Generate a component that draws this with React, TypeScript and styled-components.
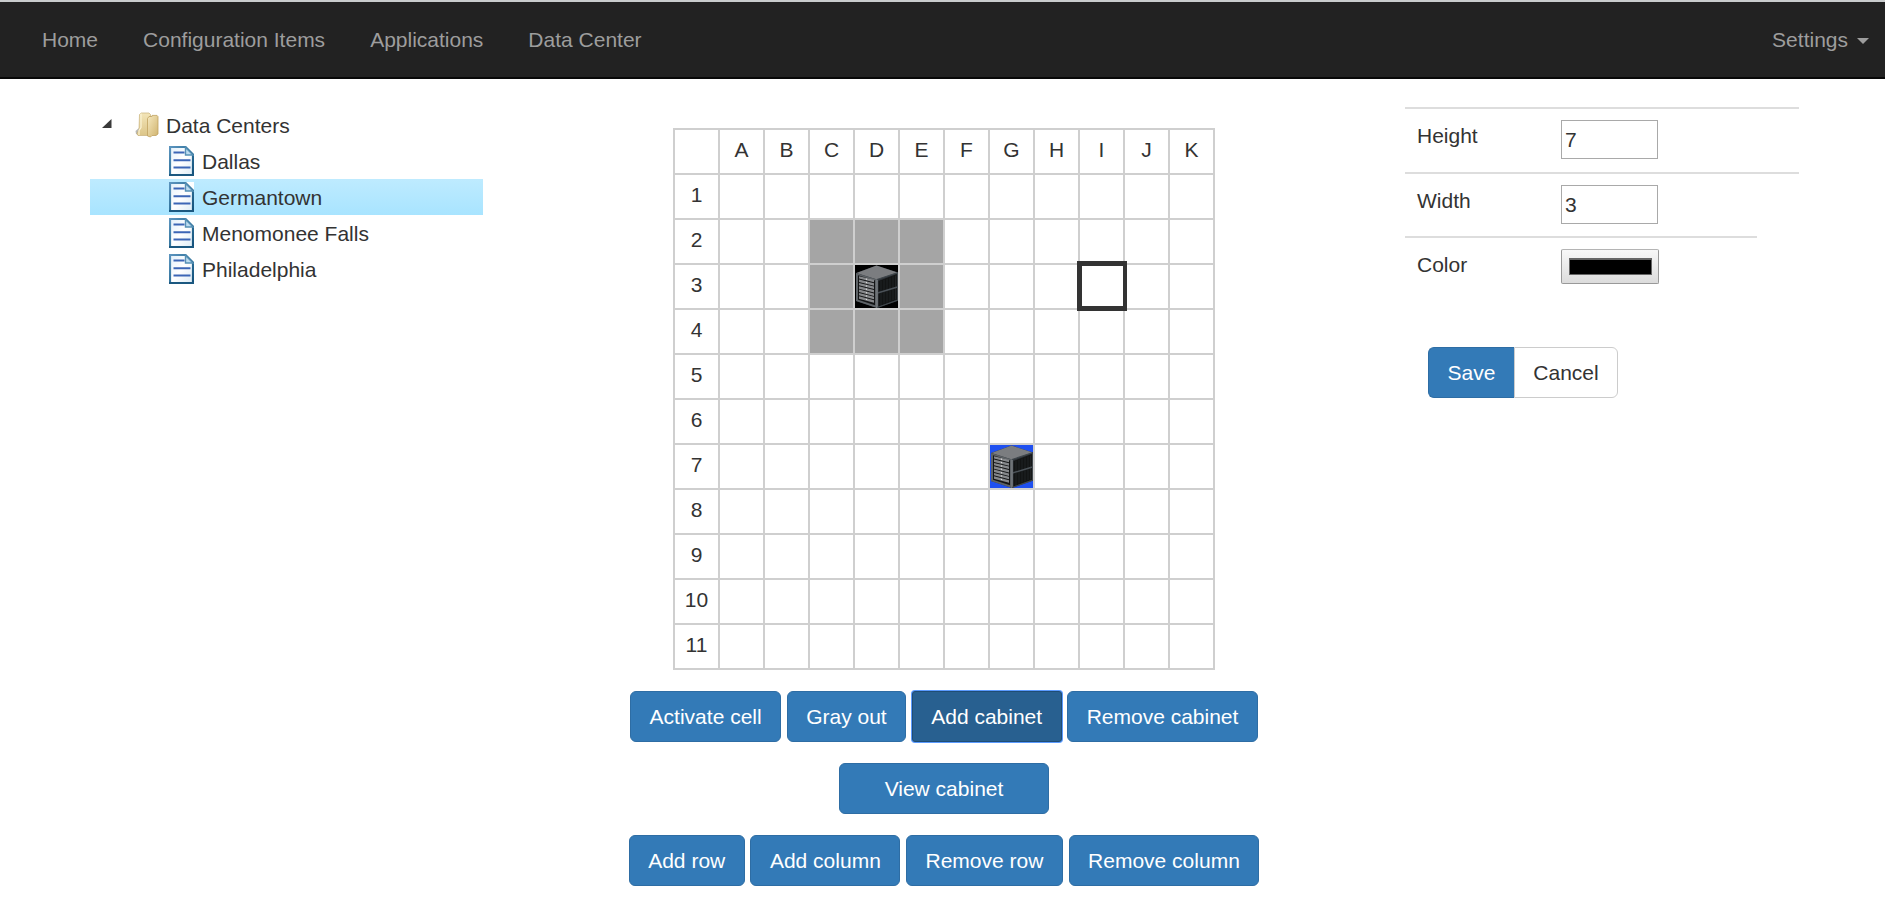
import React from "react";
import styled, { createGlobalStyle, css } from "styled-components";

const GlobalStyle = createGlobalStyle`
  *, *::before, *::after { box-sizing: border-box; }
  body {
    margin: 0;
    background: #fff;
    color: #333;
    font-family: "Liberation Sans", Arial, sans-serif;
    font-size: 21px;
    line-height: 30px;
  }
  button, input { font: inherit; color: inherit; }
`;

const Page = styled.div`
  height: 923px;
  overflow: hidden;
`;

const Navbar = styled.nav`
  display: flex;
  justify-content: space-between;
  align-items: center;
  height: 79px;
  padding: 0 16px 0 42px;
  border-top: 2px solid #c9cccd;
  border-bottom: 2px solid #080808;
  background: #222;
  color: #9d9d9d;
`;

const NavLinks = styled.div`
  display: flex;
  gap: 45px;
`;

const NavLink = styled.a`
  display: flex;
  align-items: center;
`;

const Caret = styled.span`
  margin: 3px 0 0 9px;
  border-top: 6px solid;
  border-left: 6px solid transparent;
  border-right: 6px solid transparent;
`;

const Content = styled.main`
  display: grid;
  grid-template-columns: 393px 640px 394px;
  justify-content: start;
  column-gap: 141px;
  padding: 28px 0 0 90px;
`;

const Tree = styled.ul`
  margin: 0;
  padding: 0;
  list-style: none;
`;

const TreeRow = styled.li<{ $selected?: boolean; $depth: number }>`
  display: flex;
  align-items: center;
  height: 36px;
  padding-left: ${(p) => (p.$depth ? 79 : 12)}px;
  line-height: 36px;
  ${(p) => p.$selected && css`background: linear-gradient(#beebff, #a8e4ff);`}
  svg { flex: none; }
`;

const RootLabel = styled.span`
  margin-left: 7px;
  padding-top: 2px;
`;

const LeafLabel = styled.span`
  margin-left: 8px;
  padding-top: 2px;
`;

const ExpandArrow = styled.svg`
  margin: -3px 23px 0 0;
`;

const Center = styled.section`
  display: flex;
  flex-direction: column;
  align-items: center;
  padding-top: 21px;
`;

const FloorGrid = styled.div`
  display: grid;
  grid-template-columns: repeat(12, 43px);
  grid-auto-rows: 43px;
  gap: 2px;
  padding: 2px;
  margin-bottom: 20.500px;
  background: #cfcfcf;
`;

const Cell = styled.div<{ $fill?: string; $active?: boolean }>`
  display: flex;
  align-items: center;
  justify-content: center;
  padding-bottom: ${(p) => (p.$fill ? 0 : 3)}px;
  background: ${(p) => p.$fill || "#fff"};
  ${(p) => p.$active && css`
    position: relative;
    &::after {
      content: "";
      position: absolute;
      inset: -4px -4px -3px -3px;
      border: 5px solid #333;
      border-right-width: 4px;
    }
  `}
`;

const ButtonRow = styled.div<{ $gap: number }>`
  display: flex;
  gap: ${(p) => p.$gap}px;
  margin-bottom: 21px;
`;

const Button = styled.button<{ $focused?: boolean; $wide?: boolean }>`
  height: 51px;
  padding: 2px 18.500px 0;
  ${(p) => p.$wide && css`width: 210px;`}
  border: 1px solid ${(p) => (p.$focused ? "#204d74" : "#2e6da4")};
  border-radius: 6px;
  background: ${(p) => (p.$focused ? "#286090" : "#337ab7")};
  color: #fff;
  white-space: nowrap;
  ${(p) => p.$focused && css`box-shadow: 0 0 0 1px #5b9bff; border-radius: 3px;`}
`;

const Panel = styled.section`
  display: flex;
  flex-direction: column;
  align-items: flex-start;
`;

const Field = styled.label<{ $width: number; $height: number }>`
  display: flex;
  align-items: flex-start;
  width: ${(p) => p.$width}px;
  height: ${(p) => p.$height}px;
  padding: 11px 12px;
  border-top: 2px solid #ddd;
`;

const FieldName = styled.span`
  width: 144px;
  margin-top: 1px;
`;

const NumberInput = styled.input`
  width: 97px;
  height: 39px;
  padding: 1px 3px;
  border: 1px solid #a9a9a9;
  border-radius: 0;
  background: #fff;
`;

const ColorWell = styled.span`
  display: flex;
  width: 98px;
  height: 35px;
  padding: 8px 6px 8px 7px;
  border: 1px solid #999;
  border-top-color: #b4b4b4;
  border-radius: 2px;
  background: linear-gradient(#f8f8f8, #dcdcdc);
`;

const ColorSwatch = styled.span`
  flex: 1;
  border: 1px solid #666;
  border-top-width: 2px;
  background: #000;
`;

const ButtonGroup = styled.div`
  display: flex;
  margin: 45px 0 0 23px;
`;

const SaveButton = styled(Button)`
  width: 86px;
  padding: 0;
  border-right: 0;
  border-radius: 6px 0 0 6px;
`;

const CancelButton = styled(Button)`
  width: 104px;
  padding: 0;
  border-color: #ccc;
  border-radius: 0 6px 6px 0;
  background: #fff;
  color: #333;
`;

const FolderIcon = () => (
  <svg width="24" height="26" viewBox="0 0 24 26">
    <defs>
      <linearGradient id="folderFront" x1="0" y1="0" x2="1" y2="1">
        <stop offset="0" stopColor="#f6e9bf" />
        <stop offset="1" stopColor="#d0b36e" />
      </linearGradient>
      <linearGradient id="folderBack" x1="0" y1="0" x2="0" y2="1">
        <stop offset="0" stopColor="#f3e5b8" />
        <stop offset="1" stopColor="#dcc588" />
      </linearGradient>
    </defs>
    <path d="M.5 19 4 16v7.500L1 22z" fill="#b8b8b4" />
    <path d="M4.500 2.500 6 1h8l1.500 1.500V22l-1 1.500H3l-1-2 2-4z" fill="url(#folderBack)" stroke="#c9b27a" strokeWidth=".7" />
    <path d="M6 1.500v14l-2 3v4.500" fill="none" stroke="#fbf3d6" strokeWidth="1.200" />
    <path d="M12.500 6.500 14 4.500h3V3.400h5l1 1.200V22l-2 1.500h-4L15.500 25l-3-1z" fill="url(#folderFront)" stroke="#c0a25f" strokeWidth=".8" />
  </svg>
);

const DocumentIcon = () => (
  <svg width="25" height="30" viewBox="0 0 25 30">
    <defs>
      <linearGradient id="docEdge" x1="0" y1="0" x2="1" y2="1">
        <stop offset="0" stopColor="#5b94be" />
        <stop offset=".55" stopColor="#2d7099" />
        <stop offset="1" stopColor="#14517b" />
      </linearGradient>
      <linearGradient id="docPaper" x1="0" y1="0" x2="1" y2="1">
        <stop offset="0" stopColor="#e2f0fb" />
        <stop offset=".5" stopColor="#fff" />
        <stop offset="1" stopColor="#dcebf5" />
      </linearGradient>
    </defs>
    <path d="M0 0h25v30H0z" fill="#fff" />
    <path d="M1 1h15.500L24 8.500V29H1z" fill="url(#docPaper)" stroke="url(#docEdge)" strokeWidth="2.200" />
    <path d="M16.500 1.500V9H24z" fill="#bddcf0" stroke="#5690b5" strokeWidth="1.400" />
    <path d="M4.500 6.500h11M4.500 14.300h17M4.500 21.600h17" stroke="#3c66b6" strokeWidth="2" />
    <path d="M0 29h25" stroke="#1b5880" strokeWidth="2" />
  </svg>
);

const CabinetIcon = () => (
  <svg width="43" height="43" viewBox="0 0 43 43">
    <path d="M1 8 21.500.500 43 7.500v28L22 43 1 36z" fill="#30353a" />
    <path d="M1.500 8 21.500.500 42.500 7.500 22 14.500z" fill="#7b7d80" />
    <path d="M1 8 22 14.500V43L1 36z" fill="#5d6266" />
    <path d="M3 10.200 20 15.500v24.800L3 34.800z" fill="#131415" />
    {[0, 1, 2, 3, 4, 5, 6].map((i) => (
      <path
        key={i}
        d={`M4 ${11.2 + i * 3.35} 19 ${14.8 + i * 3.4}v2.500L4 ${13.6 + i * 3.35}z`}
        fill="#85878a"
      />
    ))}
    {[0, 1, 2, 3, 4, 5, 6].map((i) => (
      <circle key={i} cx="11.500" cy={14.2 + i * 3.37} r=".7" fill="#d8d8d8" />
    ))}
    <path d="M23.500 16 42 9v25.800L23.500 41.500z" fill="#121414" />
    <path d="M26 15.500v24.500M29 14.500v24M32 13.500v24M35 12.500v24M38 11.300v24M40.500 10.500v24" stroke="#24272a" strokeWidth=".8" />
    <path d="M22.500 28 42.500 22" stroke="#4b5258" strokeWidth="1.400" />
    <path d="M22 14.500V43" stroke="#73787c" strokeWidth="1.700" />
    <path d="M22 14.500 42.500 7.800V35.200L22 42.500" fill="none" stroke="#3f464b" strokeWidth="1.200" />
  </svg>
);

const columns = ["A", "B", "C", "D", "E", "F", "G", "H", "I", "J", "K"];
const rows = [1, 2, 3, 4, 5, 6, 7, 8, 9, 10, 11];
const cabinets: Record<string, string> = { D3: "#000", G7: "#1f50f0" };
const grayed = ["C2", "D2", "E2", "C3", "E3", "C4", "D4", "E4"];
const locations = ["Dallas", "Germantown", "Menomonee Falls", "Philadelphia"];

export default function App() {
  return (
    <Page>
      <GlobalStyle />
      <Navbar>
        <NavLinks>
          <NavLink>Home</NavLink>
          <NavLink>Configuration Items</NavLink>
          <NavLink>Applications</NavLink>
          <NavLink>Data Center</NavLink>
        </NavLinks>
        <NavLink>
          Settings
          <Caret />
        </NavLink>
      </Navbar>
      <Content>
        <Tree>
          <TreeRow $depth={0}>
            <ExpandArrow width="10" height="9" viewBox="0 0 10 9">
              <path d="M9.500 0V9H0z" fill="#3a3a3a" />
            </ExpandArrow>
            <FolderIcon />
            <RootLabel>Data Centers</RootLabel>
          </TreeRow>
          {locations.map((name) => (
            <TreeRow key={name} $depth={1} $selected={name === "Germantown"}>
              <DocumentIcon />
              <LeafLabel>{name}</LeafLabel>
            </TreeRow>
          ))}
        </Tree>
        <Center>
          <FloorGrid>
            <Cell />
            {columns.map((c) => (
              <Cell key={c}>{c}</Cell>
            ))}
            {rows.map((r) => (
              <React.Fragment key={r}>
                <Cell>{r}</Cell>
                {columns.map((c) => {
                  const id = `${c}${r}`;
                  const fill = cabinets[id] || (grayed.includes(id) ? "#a5a5a5" : undefined);
                  return (
                    <Cell key={id} $fill={fill} $active={id === "I3"}>
                      {cabinets[id] && <CabinetIcon />}
                    </Cell>
                  );
                })}
              </React.Fragment>
            ))}
          </FloorGrid>
          <ButtonRow $gap={5.5}>
            <Button>Activate cell</Button>
            <Button>Gray out</Button>
            <Button $focused>Add cabinet</Button>
            <Button>Remove cabinet</Button>
          </ButtonRow>
          <ButtonRow $gap={5.5}>
            <Button $wide>View cabinet</Button>
          </ButtonRow>
          <ButtonRow $gap={5.7}>
            <Button>Add row</Button>
            <Button>Add column</Button>
            <Button>Remove row</Button>
            <Button>Remove column</Button>
          </ButtonRow>
        </Center>
        <Panel>
          <Field $width={394} $height={65}>
            <FieldName>Height</FieldName>
            <NumberInput defaultValue="7" />
          </Field>
          <Field $width={394} $height={64}>
            <FieldName>Width</FieldName>
            <NumberInput defaultValue="3" />
          </Field>
          <Field $width={352} $height={66}>
            <FieldName>Color</FieldName>
            <ColorWell>
              <ColorSwatch />
            </ColorWell>
          </Field>
          <ButtonGroup>
            <SaveButton>Save</SaveButton>
            <CancelButton>Cancel</CancelButton>
          </ButtonGroup>
        </Panel>
      </Content>
    </Page>
  );
}
